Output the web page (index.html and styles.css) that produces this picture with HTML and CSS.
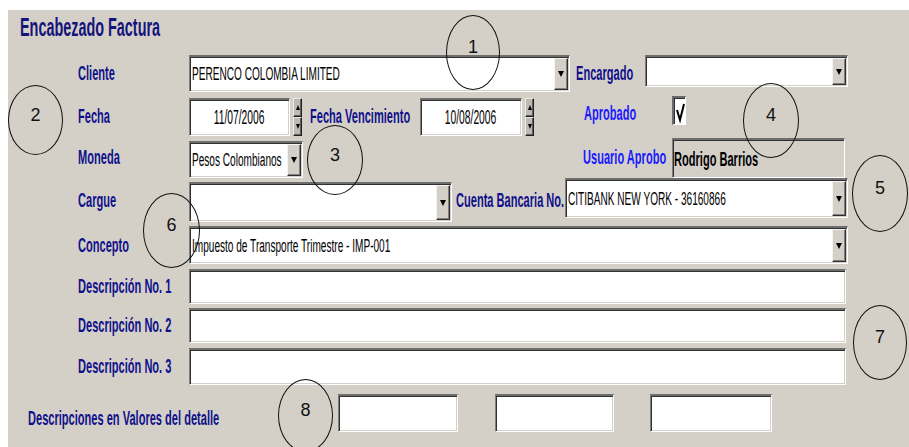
FILE: index.html
```html
<!DOCTYPE html>
<html lang="es">
<head>
  <meta charset="UTF-8">
  <title>Encabezado Factura</title>
  <link rel="stylesheet" href="styles.css">
</head>
<body>
  <div class="panel">
    <div class="title"><span class="tx">Encabezado Factura</span></div>

    <div class="row r1">
      <div class="lbl"><span class="tx">Cliente</span></div>
      <div class="box combo w-cliente">
        <div class="val"><span class="tx">PERENCO COLOMBIA LIMITED</span></div>
        <div class="drop"></div>
      </div>
      <div class="lbl lbl-enc"><span class="tx">Encargado</span></div>
      <div class="box combo w-enc">
        <div class="val"></div>
        <div class="drop"></div>
      </div>
    </div>

    <div class="row r2">
      <div class="lbl"><span class="tx">Fecha</span></div>
      <div class="box date w-fecha"><span class="tx">11/07/2006</span></div>
      <div class="spin"><div class="up"></div><div class="down"></div></div>
      <div class="lbl lbl-fv"><span class="tx">Fecha Vencimiento</span></div>
      <div class="box date w-fecha2"><span class="tx">10/08/2006</span></div>
      <div class="spin"><div class="up"></div><div class="down"></div></div>
      <div class="lbl lbl-blue lbl-apr"><span class="tx">Aprobado</span></div>
      <div class="check">
        <svg width="12" height="26" viewBox="0 0 12 26"><polyline points="3,12 6,22 10,6" fill="none" stroke="#000" stroke-width="2"/></svg>
      </div>
    </div>

    <div class="row r3">
      <div class="lbl"><span class="tx">Moneda</span></div>
      <div class="box combo w-moneda">
        <div class="val"><span class="tx">Pesos Colombianos</span></div>
        <div class="drop"></div>
      </div>
      <div class="lbl lbl-blue lbl-usr"><span class="tx">Usuario Aprobo</span></div>
      <div class="box readonly w-usr"><span class="tx">Rodrigo Barrios</span></div>
    </div>

    <div class="row r4">
      <div class="lbl"><span class="tx">Cargue</span></div>
      <div class="box combo w-cargue">
        <div class="val"></div>
        <div class="drop"></div>
      </div>
      <div class="lbl lbl-cta"><span class="tx">Cuenta Bancaria No.</span></div>
      <div class="box combo w-cta">
        <div class="val"><span class="tx">CITIBANK NEW YORK - 36160866</span></div>
        <div class="drop"></div>
      </div>
    </div>

    <div class="row r5">
      <div class="lbl"><span class="tx">Concepto</span></div>
      <div class="box combo w-full">
        <div class="val"><span class="tx">Impuesto de Transporte Trimestre - IMP-001</span></div>
        <div class="drop"></div>
      </div>
    </div>

    <div class="row r6">
      <div class="lbl"><span class="tx">Descripción No. 1</span></div>
      <div class="box w-desc"></div>
    </div>
    <div class="row r7">
      <div class="lbl"><span class="tx">Descripción No. 2</span></div>
      <div class="box w-desc"></div>
    </div>
    <div class="row r8">
      <div class="lbl"><span class="tx">Descripción No. 3</span></div>
      <div class="box w-desc"></div>
    </div>

    <div class="row r9">
      <div class="lbl lbl-det"><span class="tx">Descripciones en Valores del detalle</span></div>
      <div class="box w-v1"></div>
      <div class="box w-v2"></div>
      <div class="box w-v3"></div>
    </div>

    <div class="mark m1">1</div>
    <div class="mark m2">2</div>
    <div class="mark m3">3</div>
    <div class="mark m4">4</div>
    <div class="mark m5">5</div>
    <div class="mark m6">6</div>
    <div class="mark m7">7</div>
    <div class="mark m8">8</div>
  </div>
</body>
</html>
```

FILE: styles.css
```css
*{
  margin: 0;
  padding: 0;
  box-sizing: border-box;
}
body{
  background-color: #fff;
  font-family: "Liberation Sans", Arial, sans-serif;
}
.panel{
  margin: 10px 0 0 8px;
  height: 437px;
  background-color: #d4d0c8;
  position: relative;
  overflow: hidden;
}
/* narrow, tall text like the old form font */
.tx{
  display: inline-block;
  transform: scale(0.79, 1.5);
  transform-origin: 0 50%;
  white-space: nowrap;
}
.title{
  height: 45px;
  padding: 0 0 9px 12px;
  display: flex;
  align-items: center;
  color: #14147c;
  font-weight: bold;
  font-size: 18px;
}
.title .tx{
  transform: scale(0.8, 1.45);
}

/* rows */
.row{
  display: flex;
  align-items: center;
}
.r1{ height: 37px; }
.r2{ height: 39px; margin-top: 5px; }
.r3{ height: 41px; margin-top: 1px; }
.r4{ height: 44px; }
.r5{ height: 38px; margin-top: 4px; }
.r6{ height: 35px; margin-top: 5px; }
.r7{ height: 35px; margin-top: 4px; }
.r8{ height: 37px; margin-top: 5px; }
.r9{ height: 38px; margin-top: 9px; }

/* labels */
.lbl{
  width: 111px;
  margin-left: 70px;
  padding-bottom: 3px;
  flex-shrink: 0;
  color: #10108a;
  font-weight: bold;
  font-size: 14px;
}
.lbl-blue{ color: #1a1aff; }
.lbl-enc{ margin-left: 6px; width: 69px; }
.lbl-fv{ margin-left: 8px; width: 110px; }
.lbl-apr{ margin-left: 50px; width: 88px; margin-bottom: 6px; }
.lbl-usr{ margin-left: 280px; width: 89px; }
.lbl-cta{ margin-left: 4px; width: 109px; }
.lbl-det{ margin-left: 20px; width: 310px; margin-top: 10px; }

/* sunken fields */
.box{
  height: 100%;
  flex-shrink: 0;
  background-color: #fff;
  border-style: solid;
  border-width: 2px 1px 1px 1px;
  border-color: #6e6e6e #fff #fff #808080;
  box-shadow: inset 1px 1px 0 #303030, inset -1px -1px 0 #d4d0c8;
  display: flex;
  align-items: center;
  font-size: 12px;
  color: #000;
}
.combo{
  padding: 1px 1px 1px 2px;
  align-items: stretch;
}
.combo .val{
  flex: 1;
  display: flex;
  align-items: center;
  overflow: hidden;
}
.combo .val .tx{
  transform: scale(0.84, 1.5);
}
.drop{
  width: 14px;
  background-color: #d4d0c8;
  border: 1px solid;
  border-color: #f4f4f4 #303030 #303030 #f4f4f4;
  box-shadow: inset -1px -1px 0 #808080;
  display: flex;
  align-items: center;
  justify-content: center;
}
.drop::after{
  content: '';
  border-left: 3.5px solid transparent;
  border-right: 3.5px solid transparent;
  border-top: 6px solid #000;
}
.date{
  justify-content: center;
  font-size: 13px;
}
.date .tx{
  transform-origin: 50% 50%;
}
.readonly{
  background-color: #d4d0c8;
  font-weight: bold;
  font-size: 14px;
  padding-left: 1px;
}

.w-cliente{ width: 381px; }
.w-enc{ width: 203px; height: 32px; align-self: flex-start; }
.w-fecha{ width: 101px; height: 38px; }
.w-fecha2{ width: 102px; height: 38px; }
.w-moneda{ width: 114px; height: 37px; align-self: flex-end; }
.w-usr{ width: 173px; height: 40px; }
.w-cargue{ width: 263px; height: 40px; align-self: flex-end; }
.w-cta{ width: 283px; height: 40px; align-self: flex-start; }
.w-full{ width: 659px; }
.w-desc{ width: 657px; }
.w-v1{ width: 120px; }
.w-v2{ width: 119px; margin-left: 37px; }
.w-v3{ width: 122px; margin-left: 36px; }

/* spin buttons */
.spin{
  width: 9px;
  height: 38px;
  margin-left: 3px;
  display: flex;
  flex-direction: column;
}
.spin>div{
  flex: 1;
  background-color: #bdbab4;
  border: 1px solid;
  border-color: #e8e8e8 #202020 #202020 #e8e8e8;
  box-shadow: inset -1px -1px 0 #606060;
  display: flex;
  align-items: center;
  justify-content: center;
}
.spin .up::after{
  content: '';
  border-left: 2.5px solid transparent;
  border-right: 2.5px solid transparent;
  border-bottom: 5px solid #000;
}
.spin .down::after{
  content: '';
  border-left: 2.5px solid transparent;
  border-right: 2.5px solid transparent;
  border-top: 5px solid #000;
}

/* checkbox */
.check{
  width: 14px;
  height: 29px;
  align-self: flex-start;
  margin-top: -1px;
  background-color: #fff;
  border-style: solid;
  border-width: 2px 1px 1px 2px;
  border-color: #6a6a6a #fff #fff #6a6a6a;
  box-shadow: inset 1px 1px 0 #303030;
}
.check svg{
  display: block;
}

/* annotation circles */
.mark{
  position: absolute;
  border: 1.5px solid #111;
  border-radius: 50%;
  display: flex;
  align-items: center;
  justify-content: center;
  padding-bottom: 10px;
  font-size: 18px;
  color: #111;
}
.m1{ left: 438px; top: 5px; width: 54px; height: 75px; }
.m2{ left: 0; top: 75px; width: 55px; height: 70px; }
.m3{ left: 299px; top: 115px; width: 56px; height: 70px; }
.m4{ left: 735px; top: 73px; width: 56px; height: 75px; }
.m5{ left: 844px; top: 145px; width: 56px; height: 77px; }
.m6{ left: 135px; top: 183px; width: 57px; height: 75px; }
.m7{ left: 845px; top: 295px; width: 54px; height: 75px; }
.m8{ left: 270px; top: 369px; width: 55px; height: 73px; }
```
